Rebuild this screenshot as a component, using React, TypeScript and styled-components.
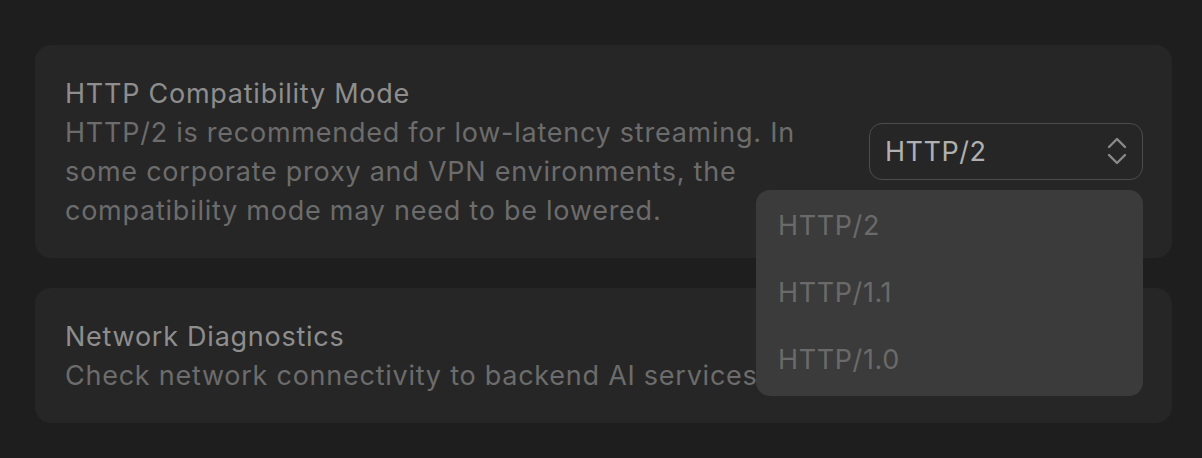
import React from 'react'
import styled, { createGlobalStyle } from 'styled-components'

const GlobalStyle = createGlobalStyle`
  html, body {
    margin: 0;
    padding: 0;
    background: #1e1e1e;
  }
  body {
    font-family: Inter, 'Noto Sans', sans-serif;
    -webkit-font-smoothing: antialiased;
  }
`

const Page = styled.div`
  display: flex;
  flex-direction: column;
  gap: 30px;
  padding: 45px 30px 35px 35px;
  box-sizing: border-box;
  width: 1202px;
  height: 458px;
`

const Card = styled.div`
  display: flex;
  flex-direction: row;
  align-items: center;
  gap: 40px;
  padding: 29px 29px 28px 30px;
  background: #262626;
  border-radius: 16px;
`

const Info = styled.div`
  flex: 1;
  display: flex;
  flex-direction: column;
`

const Title = styled.div`
  font-size: 27px;
  line-height: 39px;
  letter-spacing: 0.75px;
  color: #8e8e8e;
`

const Description = styled.div<{ $wrap?: number }>`
  font-size: 27px;
  line-height: 39px;
  letter-spacing: 0.75px;
  color: #6c6c6c;
  max-width: ${props => (props.$wrap ? `${props.$wrap}px` : 'none')};
`

const SelectWrap = styled.div`
  position: relative;
  align-self: center;
  margin-top: -2px;
`

const SelectButton = styled.div`
  display: flex;
  align-items: center;
  justify-content: space-between;
  box-sizing: border-box;
  width: 274px;
  height: 57px;
  padding: 0 14px 0 15px;
  border: 1.5px solid #4c4c4c;
  border-radius: 13px;
  font-size: 27px;
  letter-spacing: 0.5px;
  color: #b0b0b0;
`

const Menu = styled.div`
  position: absolute;
  top: 67px;
  right: 0;
  width: 387px;
  box-sizing: border-box;
  padding: 2px 0 3px 22px;
  background: #3b3b3b;
  border-radius: 14px;
  display: flex;
  flex-direction: column;
  z-index: 2;
`

const MenuItem = styled.div`
  height: 67px;
  display: flex;
  align-items: center;
  font-size: 27px;
  letter-spacing: 0.6px;
  color: #6a6a6a;
`

const Chevrons = () => (
  <svg width="22" height="30" viewBox="0 0 22 30" fill="none">
    <path d="M3 11 L11 3 L19 11" stroke="#8a8a8a" strokeWidth="2.4" strokeLinecap="round" strokeLinejoin="round" />
    <path d="M3 19 L11 27 L19 19" stroke="#8a8a8a" strokeWidth="2.4" strokeLinecap="round" strokeLinejoin="round" />
  </svg>
)

const options = ['HTTP/2', 'HTTP/1.1', 'HTTP/1.0']

export default function App() {
  return (
    <>
      <GlobalStyle />
      <Page>
        <Card>
          <Info>
            <Title>HTTP Compatibility Mode</Title>
            <Description $wrap={770}>
              HTTP/2 is recommended for low-latency streaming. In some corporate proxy and VPN
              environments, the compatibility mode may need to be lowered.
            </Description>
          </Info>
          <SelectWrap>
            <SelectButton>
              <span>HTTP/2</span>
              <Chevrons />
            </SelectButton>
            <Menu>
              {options.map(o => (
                <MenuItem key={o}>{o}</MenuItem>
              ))}
            </Menu>
          </SelectWrap>
        </Card>
        <Card>
          <Info>
            <Title>Network Diagnostics</Title>
            <Description>Check network connectivity to backend AI services</Description>
          </Info>
        </Card>
      </Page>
    </>
  )
}
